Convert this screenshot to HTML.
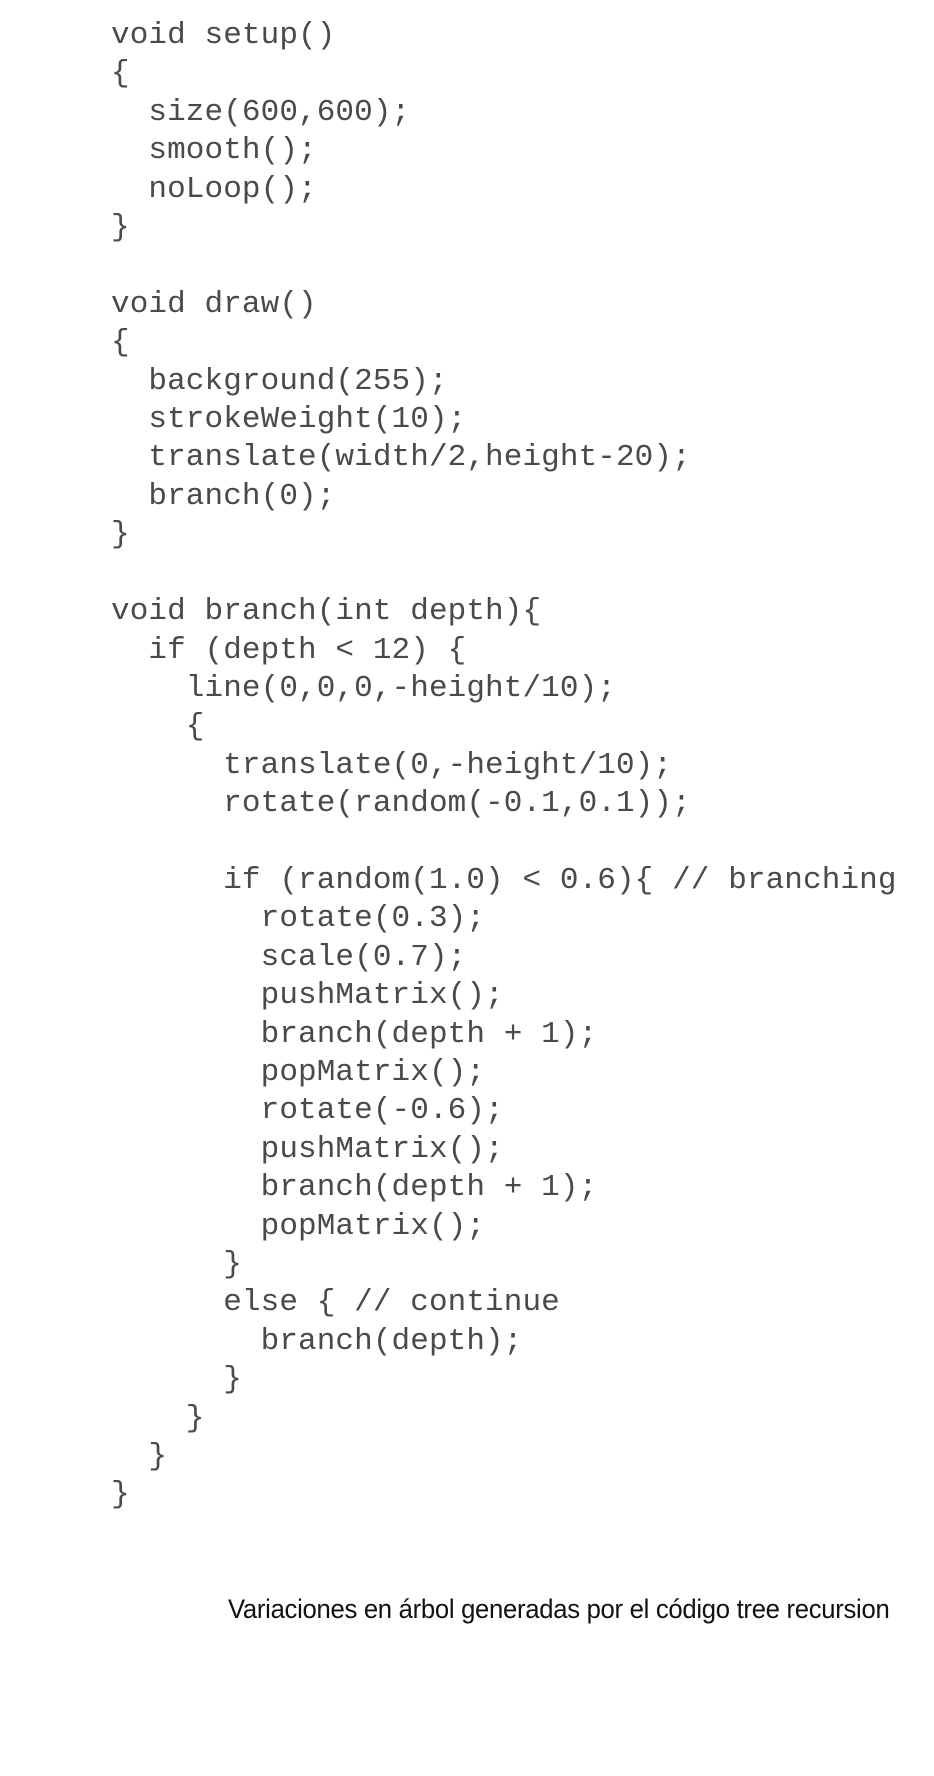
<!DOCTYPE html>
<html><head><meta charset="utf-8"><style>
html,body{margin:0;padding:0;background:#fff;width:934px;height:1776px;overflow:hidden}
pre{position:absolute;left:111px;top:17px;margin:0;font-family:"Liberation Mono",monospace;font-size:31px;line-height:38.4px;color:#4a4a4a;letter-spacing:0.1px}
.cap{position:absolute;left:228px;top:1594px;font-family:"Liberation Sans",sans-serif;font-size:27px;color:#111;white-space:nowrap;transform-origin:0 0;transform:scaleX(0.95);letter-spacing:-0.3px}
</style></head><body>
<pre>void setup()
{
  size(600,600);
  smooth();
  noLoop();
}

void draw()
{
  background(255);
  strokeWeight(10);
  translate(width/2,height-20);
  branch(0);
}

void branch(int depth){
  if (depth &lt; 12) {
    line(0,0,0,-height/10);
    {
      translate(0,-height/10);
      rotate(random(-0.1,0.1));

      if (random(1.0) &lt; 0.6){ // branching
        rotate(0.3);
        scale(0.7);
        pushMatrix();
        branch(depth + 1);
        popMatrix();
        rotate(-0.6);
        pushMatrix();
        branch(depth + 1);
        popMatrix();
      }
      else { // continue
        branch(depth);
      }
    }
  }
}</pre>
<div class="cap">Variaciones en árbol generadas por el código tree recursion</div>
</body></html>
